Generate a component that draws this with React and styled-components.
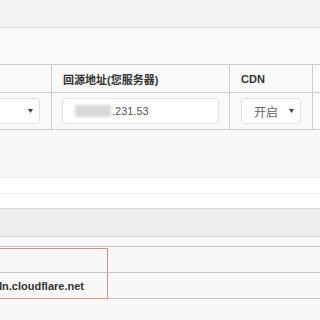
import styled, { createGlobalStyle } from "styled-components";

const GlobalStyle = createGlobalStyle`
  body {
    margin: 0;
    background: #f8f8f8;
    font-family: "Liberation Sans", "Noto Sans CJK SC", sans-serif;
    overflow: hidden;
  }
`;

const Arrow = () => (
  <svg width="5" height="4" viewBox="0 0 5 4">
    <path d="M0 0h5L2.5 4z" fill="#444" />
  </svg>
);

const App = () => {
  return (
    <Page>
      <GlobalStyle />
      <TopBar />
      <Panel>
        <Grid>
          <HeadCell />
          <HeadCell>回源地址(您服务器)</HeadCell>
          <HeadCell>CDN</HeadCell>
          <HeadCell $last />
          <BodyCell $pad="0 11px 0 0">
            <Select $grow>
              <span />
              <Arrow />
            </Select>
          </BodyCell>
          <BodyCell $pad="0 10px">
            <Input>
              <Masked />
              .231.53
            </Input>
          </BodyCell>
          <BodyCell $pad="0 0 0 11px">
            <Select>
              <span>开启</span>
              <Arrow />
            </Select>
          </BodyCell>
          <BodyCell $last />
        </Grid>
        <Spacer />
      </Panel>
      <WhiteRow $h={16} />
      <WhiteRow $h={14} $plain />
      <GrayBand />
      <Gap />
      <RecordTable>
        <RecordRow />
        <RecordRow>
          <HostCell>www.example.com.cdn.cloudflare.net</HostCell>
        </RecordRow>
        <Highlight />
      </RecordTable>
    </Page>
  );
};

export default App;

const Page = styled.div`
  width: 420px;
  margin-left: -60px;
`;

const TopBar = styled.div`
  height: 27px;
  background: #f3f3f3;
  border-bottom: 1px solid #dcdcdc;
`;

const Panel = styled.div`
  background: #f9f9f9;
  padding-top: 36px;
`;

const Grid = styled.div`
  display: grid;
  grid-template-columns: 112px 178px 83px 1fr;
  border-top: 1px solid #cdcdcd;
`;

const HeadCell = styled.div`
  box-sizing: border-box;
  height: 28px;
  padding: 0 11px;
  display: flex;
  align-items: center;
  border-right: ${(p) => (p.$last ? "none" : "1px solid #cdcdcd")};
  border-bottom: 1px solid #cdcdcd;
  font-size: 11px;
  font-weight: bold;
  color: #333;
  white-space: nowrap;
`;

const BodyCell = styled.div`
  box-sizing: border-box;
  height: 37px;
  padding: ${(p) => p.$pad || "0"};
  display: flex;
  align-items: center;
  border-right: ${(p) => (p.$last ? "none" : "1px solid #cdcdcd")};
  border-bottom: 1px solid #cdcdcd;
`;

const Select = styled.div`
  box-sizing: border-box;
  height: 26px;
  width: ${(p) => (p.$grow ? "auto" : "60px")};
  flex: ${(p) => (p.$grow ? "1" : "none")};
  padding: 0 6px 0 12px;
  display: flex;
  align-items: center;
  justify-content: space-between;
  background: #fff;
  border: 1px solid #e2e2e2;
  border-radius: 4px;
  font-size: 12px;
  color: #666;
`;

const Input = styled.div`
  box-sizing: border-box;
  height: 26px;
  flex: 1;
  padding: 0 12px;
  display: flex;
  align-items: center;
  background: #fff;
  border: 1px solid #e2e2e2;
  border-radius: 4px;
  font-size: 11px;
  color: #555;
`;

const Masked = styled.span`
  display: inline-block;
  width: 36px;
  height: 12px;
  margin-right: 1px;
  background: #d8d8d8;
  filter: blur(1.5px);
`;

const Spacer = styled.div`
  height: 47px;
  background: #f8f8f8;
  border-bottom: 1px solid #ececec;
`;

const WhiteRow = styled.div`
  height: ${(p) => p.$h}px;
  box-sizing: border-box;
  background: #fff;
  border-bottom: ${(p) => (p.$plain ? "none" : "1px solid #f0f0f0")};
`;

const GrayBand = styled.div`
  height: 27px;
  background: #eee;
  border-top: 1px solid #d8d8d8;
  border-bottom: 1px solid #d8d8d8;
`;

const Gap = styled.div`
  height: 9px;
`;

const RecordTable = styled.div`
  position: relative;
  border-top: 1px solid #c4c4c4;
`;

const RecordRow = styled.div`
  box-sizing: border-box;
  height: 26px;
  display: grid;
  grid-template-columns: 168px 1fr;
  border-bottom: 1px solid #c4c4c4;
`;

const HostCell = styled.div`
  display: flex;
  align-items: center;
  justify-content: flex-end;
  padding-right: 24px;
  overflow: hidden;
  white-space: nowrap;
  font-size: 11px;
  font-weight: bold;
  color: #333;
`;

const Highlight = styled.div`
  position: absolute;
  top: 1px;
  left: 0;
  width: 168px;
  height: 51px;
  box-sizing: border-box;
  border: 1px solid #e08a80;
  pointer-events: none;
`;
